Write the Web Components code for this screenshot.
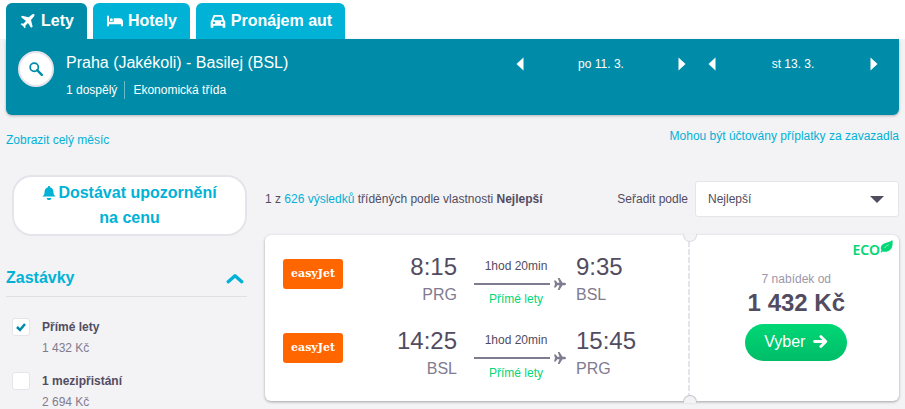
<!DOCTYPE html>
<html lang="cs">
<head>
<meta charset="utf-8">
<meta name="viewport" content="width=device-width, initial-scale=1">
<title>Lety</title>
<style>
  :root { --teal: #008ca8; --cyan: #00b2d6; --ink: #524c61; --muted: #817b8f; --line: #e6e4eb; --green: #00d775; --page: #f3f2f5; }
  body { margin: 0; background: var(--page); color: var(--ink); font: 12px/18px "Liberation Sans", Arial, sans-serif; }
</style>
</head>
<body>
<flight-page></flight-page>
<script>
function define(name, html, setup) {
  const template = document.createElement('template');
  template.innerHTML = '<style>*{box-sizing:border-box}a{color:inherit;text-decoration:none}button{font:inherit;color:inherit;border:0;background:none;padding:0;margin:0;cursor:pointer}svg{display:block}</style>' + html;
  customElements.define(name, class extends HTMLElement {
    constructor() {
      super();
      this.attachShadow({ mode: 'open' }).append(template.content.cloneNode(true));
    }
    connectedCallback() { if (setup) setup(this, this.shadowRoot); }
  });
}

const icons = {
  plane: '<path d="M3 4l10 2.500L17.500 2.500c1.400-1.200 3.200-1.500 3.900-.8s.4 2.500-.8 3.900L16.500 10.500 19 20.500l-2.500 1.500-4.500-7-4 4 .5 2.500L7 23l-2.500-3.500L1 17l1.500-1.500 2.500.5 4-4L1.500 6z"/>',
  bed: '<path d="M0 4h3v9h7V8h9c3 0 5 2 5 5v7h-3v-3H3v3H0z"/><circle cx="6.500" cy="10" r="2.300"/>',
  car: '<path fill-rule="evenodd" d="M7 3h10c1.500 0 2 .5 2.500 2l2 6c1 .6 1.500 1.500 1.500 3v8h-4v-3H5v3H1v-8c0-1.500.5-2.400 1.500-3l2-6C5 3.500 5.500 3 7 3zm.5 2.500L5.500 11h13l-2-5.500zM6 13a1.800 1.800 0 100 3.600A1.800 1.800 0 006 13zm12 0a1.800 1.800 0 100 3.600 1.800 1.800 0 000-3.600z"/>',
  search: '<circle cx="9" cy="9" r="7" fill="none" stroke="currentColor" stroke-width="3"/><path d="M14 14l8 8" stroke="currentColor" stroke-width="4" stroke-linecap="round"/>',
  bell: '<path d="M12 0c1.300 0 1.800.8 1.800 2C18 3 19.500 6 19.500 9.500c0 4 1 6.500 4 8.500H.5c3-2 4-4.500 4-8.500C4.500 6 6 3 10.200 2c0-1.200.5-2 1.800-2zM8 20.500h8c0 2-1.500 3.500-4 3.500s-4-1.500-4-3.500z"/>',
  up: '<path d="M3 17l9-8 9 8" fill="none" stroke="currentColor" stroke-width="4.500" stroke-linecap="round" stroke-linejoin="round"/>',
  left: '<path d="M18 1v22L6 12z"/>',
  right: '<path d="M6 1v22l12-11z"/>',
  arrow: '<path d="M2.500 12h17M12.500 4l8 8-8 8" fill="none" stroke="currentColor" stroke-width="4.500" stroke-linecap="round" stroke-linejoin="round"/>',
  cruise: '<path d="M0 5h3.500l3 4.500H11L7.500 0h3.500l6 9.500h4c1.800 0 3 1.500 3 2.500s-1.200 2.500-3 2.500h-4L11 24H7.500L11 14.500H6.500L3.500 19H0l2-7z"/>',
  leaf: '<path d="M23 0c1 8 0 14-4 18-4 4-10 4.500-14 3L3 23l-2-1 2-3C1 16 1 13 3 10 7 4.500 16 5.500 23 0z"/><path d="M8 15c2-3 5-5 8-6" fill="none" stroke="#fff" stroke-width="1"/>'
};

define('app-icon', '<style>:host{display:inline-block;width:14px;height:14px;flex:none}svg{width:100%;height:100%;fill:currentColor}</style><svg viewBox="0 0 24 24" aria-hidden="true"></svg>',
  (host, root) => { root.querySelector('svg').innerHTML = icons[host.getAttribute('name')]; });

define('product-tab', `<style>
  :host{display:block}
  a{display:flex;align-items:center;gap:5px;height:36px;padding:0 13px 1px 14px;border-radius:6px 6px 0 0;background:var(--cyan);color:#fff;font-size:16px;font-weight:bold}
  :host([active]) a{background:var(--teal)}
  app-icon{width:16px;height:16px}
</style><a href="#"><app-icon></app-icon><slot></slot></a>`,
  (host, root) => { const i = root.querySelector('app-icon'); i.setAttribute('name', host.getAttribute('icon')); i.connectedCallback(); });

define('date-stepper', `<style>
  :host{display:flex;align-items:center;justify-content:space-between;color:#fff}
  app-icon{display:block}
</style><button aria-label="Předchozí den"><app-icon name="left"></app-icon></button><slot></slot><button aria-label="Další den"><app-icon name="right"></app-icon></button>`);

define('search-bar', `<style>
  :host{display:flex;align-items:flex-start;min-height:76px;padding:12px 18px 12px 12px;border-radius:0 0 6px 6px;background:var(--teal);color:#fff;box-shadow:0 1px 3px #0004}
  .find{display:grid;place-items:center;flex:none;width:36px;height:36px;border:2px solid var(--line);border-radius:50%;background:#fff;color:var(--teal)}
  .trip{flex:1;padding-left:12px}
  .route{font-size:16px;line-height:24px}
  .details{display:flex;margin-top:6px}
  .details span+span{border-left:1px solid #66bacb;margin-left:7px;padding-left:8px}
  .dates{display:flex;gap:16px;flex:0 1 368px;padding-top:4px}
  date-stepper{flex:1}
</style>
<button class="find" aria-label="Hledat"><app-icon name="search"></app-icon></button>
<div class="trip"><div class="route">Praha (Jakékoli) - Basilej (BSL)</div><div class="details"><span>1 dospělý</span><span>Ekonomická třída</span></div></div>
<div class="dates"><date-stepper>po 11. 3.</date-stepper><date-stepper>st 13. 3.</date-stepper></div>`);

define('price-alert', `<style>
  :host{display:block;padding-left:6px}
  button{display:block;width:100%;padding:3px 24px 4px;border:2px solid var(--line);border-radius:20px;background:#fff;color:var(--cyan);font-size:16px;font-weight:bold;line-height:25px}
  app-icon{vertical-align:-2px;margin-right:2px}
</style><button><app-icon name="bell"></app-icon><slot></slot></button>`);

define('filter-option', `<style>
  :host{display:block}
  label{display:grid;grid-template-columns:18px 1fr;column-gap:12px;padding-left:6px}
  input{appearance:none;width:18px;height:18px;margin:0;border:1px solid var(--line);border-radius:3px;background:#fff}
  input:checked{background:#fff url("data:image/svg+xml,%3Csvg xmlns='http://www.w3.org/2000/svg' viewBox='0 0 16 16'%3E%3Cpath d='M4 8l3 3 5-6' fill='none' stroke='%23008ca8' stroke-width='2.500'/%3E%3C/svg%3E") center/16px no-repeat}
  .price{grid-column:2;margin-top:3px;color:var(--muted)}
</style><label><input type="checkbox"><b><slot></slot></b><span class="price"><slot name="price"></slot></span></label>`,
  (host, root) => { root.querySelector('input').checked = host.hasAttribute('checked'); });

define('filter-group', `<style>
  :host{display:block}
  h2{margin:0 0 21px;border-bottom:1px solid #e0dfe5;font-size:16px;line-height:24px}
  button{display:flex;justify-content:space-between;align-items:center;width:100%;padding:0 3px 6px 0;color:var(--cyan);font-weight:bold}
  app-icon{width:18px;height:18px}
  .options{display:grid;gap:15px}
</style><h2><button aria-expanded="true"><slot name="title"></slot><app-icon name="up"></app-icon></button></h2><div class="options"><slot></slot></div>`);

define('sort-select', `<style>
  :host{display:flex;align-items:center;gap:7px}
  .box{position:relative;width:204px}
  select{appearance:none;width:100%;height:36px;padding:0 12px;border:1px solid var(--line);border-radius:3px;background:#fff;color:var(--ink);font:inherit}
  .box::after{content:"";position:absolute;right:15px;top:15px;border:7px solid transparent;border-top-color:var(--ink);border-bottom:0;pointer-events:none}
</style><label for="sort">Seřadit podle</label><div class="box"><select id="sort"><option>Nejlepší</option></select></div>`);

define('airline-logo', `<style>
  :host{display:grid;place-items:center;width:60px;height:30px;border-radius:3px;background:#f60;color:#fff;font:bold 11px/12px "DejaVu Serif",serif}
</style><slot></slot>`);

define('flight-leg', `<style>
  :host{display:grid;grid-template-columns:60px 114px 109px 1fr;align-items:start}
  airline-logo{margin-top:8px}
  .place{font-size:16px;line-height:24px;color:var(--muted)}
  .place b{display:block;font-weight:normal;font-size:24px;line-height:32px;color:var(--ink)}
  .from{text-align:right}
  .middle{padding:6px 0 0 17px;text-align:center}
  .middle span,.middle em{display:block;font-style:normal;padding-right:8px}
  .leg{display:grid;grid-template-columns:76px 12px;column-gap:4px;align-items:center;padding-top:3px}
  .leg i{height:2px;background:var(--muted)}
  .leg app-icon{width:12px;height:12px;color:var(--muted)}
  .middle em{color:var(--green)}
  .to{padding-left:10px}
</style><airline-logo>easyJet</airline-logo>
<div class="place from"><b><slot name="dep"></slot></b><slot name="from"></slot></div>
<div class="middle"><span><slot name="time"></slot></span><div class="leg"><i></i><app-icon name="cruise"></app-icon></div><em>Přímé lety</em></div>
<div class="place to"><b><slot name="arr"></slot></b><slot name="to"></slot></div>`);

define('ticket-card', `<style>
  :host{display:block;border-radius:6px;background:#fff;box-shadow:0 1px 3px #0005}
  .ticket{display:grid;grid-template-columns:2fr 1fr;min-height:166px}
  .legs{display:grid;align-content:start;grid-auto-rows:57px;gap:17px;padding:16px 18px}
  .offer{position:relative;display:flex;flex-direction:column;align-items:center;padding:5px 6px 12px 12px;background:linear-gradient(var(--line) 70%,#fff 70%) 0 6px/2px 8px repeat-y}
  .offer::before,.offer::after{content:"";position:absolute;left:-5px;width:12px;height:7px;background:var(--page);border:1px solid #dddce1}
  .offer::before{top:-1px;border-top:0;border-radius:0 0 7px 7px}
  .offer::after{bottom:-2px;border-color:#c6c5ca;border-bottom:0;border-radius:7px 7px 0 0}
  .eco{display:flex;align-self:flex-end;color:var(--green);font:600 14px/20px "Noto Sans",sans-serif}
  .eco app-icon{width:13px;height:13px}
  .count{margin-top:10px;color:#9c97a8}
  .price{font-size:24px;line-height:30px;font-weight:bold}
  .pick{display:flex;align-items:center;gap:8px;margin-top:6px;height:37px;padding:0 19px 2px;border-radius:20px;background:linear-gradient(#00d775,#00bd68);color:#fff;font-size:16px}
  .pick app-icon{width:15px;height:15px}
</style><div class="ticket"><div class="legs"><slot></slot></div>
<div class="offer"><div class="eco">ECO<app-icon name="leaf"></app-icon></div><div class="count">7 nabídek od</div><div class="price">1 432 Kč</div><button class="pick">Vyber <app-icon name="arrow"></app-icon></button></div></div>`);

define('flight-page', `<style>
  :host{display:block}
  nav{display:flex;gap:6px;padding:3px 6px 0;background:#fff}
  search-bar{margin:0 6px}
  .notes{display:flex;justify-content:space-between;padding:12px 6px 0;color:var(--cyan)}
  .notes a:first-child{padding-top:4px}
  .columns{display:grid;grid-template-columns:241px minmax(0,1fr);gap:18px;padding:26px 6px 0}
  aside{display:grid;align-content:start;gap:30px}
  .summary{display:flex;justify-content:space-between;align-items:center;padding:6px 0 18px}
  p{margin:0} p a{color:var(--cyan)}
</style>
<nav><product-tab icon="plane" active>Lety</product-tab><product-tab icon="bed">Hotely</product-tab><product-tab icon="car">Pronájem aut</product-tab></nav>
<search-bar></search-bar>
<div class="notes"><a href="#">Zobrazit celý měsíc</a><a href="#">Mohou být účtovány příplatky za zavazadla</a></div>
<div class="columns">
<aside><price-alert>Dostávat upozornění na cenu</price-alert>
<filter-group><span slot="title">Zastávky</span><filter-option checked>Přímé lety<span slot="price">1 432 Kč</span></filter-option><filter-option>1 mezipřistání<span slot="price">2 694 Kč</span></filter-option></filter-group></aside>
<main><div class="summary"><p>1 z <a href="#">626 výsledků</a> tříděných podle vlastnosti <b>Nejlepší</b></p><sort-select></sort-select></div>
<ticket-card>
<flight-leg><span slot="dep">8:15</span><span slot="from">PRG</span><span slot="time">1hod 20min</span><span slot="arr">9:35</span><span slot="to">BSL</span></flight-leg>
<flight-leg><span slot="dep">14:25</span><span slot="from">BSL</span><span slot="time">1hod 20min</span><span slot="arr">15:45</span><span slot="to">PRG</span></flight-leg>
</ticket-card></main></div>`);
</script>
</body>
</html>
